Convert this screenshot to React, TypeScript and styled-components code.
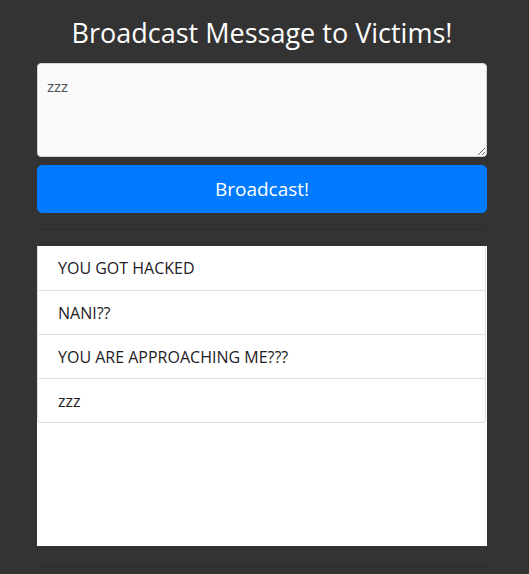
import React from "react";
import styled, { createGlobalStyle } from "styled-components";

const Global = createGlobalStyle`
  html, body { margin: 0; padding: 0; background: #333333; }
  body { font-family: "Open Sans", "Noto Sans", sans-serif; color: #212529; }
  * { box-sizing: border-box; }
`;

const Page = styled.div`
  width: 529px;
  min-height: 574px;
  background: #333333;
  padding: 16px 42px 0 37px;
`;

const Title = styled.h3`
  margin: 0 0 13px;
  font-size: 27px;
  font-weight: 400;
  line-height: 34px;
  color: #ffffff;
  text-align: center;
`;

const Form = styled.form`
  display: flex;
  flex-direction: column;
  gap: 8px;
`;

const Area = styled.textarea`
  display: block;
  width: 100%;
  height: 94px;
  padding: 10px 9px;
  font-family: inherit;
  font-size: 15px;
  line-height: 24px;
  color: #495057;
  background: #fafafa;
  border: 1px solid #ced4da;
  border-radius: 4px;
  resize: vertical;
  outline: none;
`;

const Button = styled.button`
  display: block;
  width: 100%;
  height: 48px;
  padding: 8px 16px;
  font-family: inherit;
  font-size: 19px;
  line-height: 30px;
  color: #ffffff;
  background: #007bff;
  border: 1px solid #007bff;
  border-radius: 5px;
  cursor: pointer;
`;

const Rule = styled.hr<{ $top: number }>`
  margin: ${(p) => p.$top}px 0 16px;
  border: 0;
  border-top: 1px solid rgba(0, 0, 0, 0.1);
`;

const Panel = styled.div`
  height: 300px;
  background: #ffffff;
`;

const List = styled.ul`
  list-style: none;
  margin: 0;
  padding: 0;
  width: 449px;
  border: 1px solid rgba(0, 0, 0, 0.125);
  border-top: 0;
  border-radius: 0 0 4px 4px;
`;

const Item = styled.li`
  height: 44px;
  padding: 0 20px;
  display: flex;
  align-items: center;
  font-size: 16px;
  color: #1d2125;
  & + & { border-top: 1px solid #dedede; }
`;

const messages = ["YOU GOT HACKED", "NANI??", "YOU ARE APPROACHING ME???", "zzz"];

export default function App() {
  return (
    <>
      <Global />
      <Page>
        <Title>Broadcast Message to Victims!</Title>
        <Form onSubmit={(e) => e.preventDefault()}>
          <Area defaultValue="zzz" />
          <Button type="submit">Broadcast!</Button>
        </Form>
        <Rule $top={16} />
        <Panel>
          <List>
            {messages.map((m) => (
              <Item key={m}>{m}</Item>
            ))}
          </List>
        </Panel>
        <Rule $top={21} />
      </Page>
    </>
  );
}
